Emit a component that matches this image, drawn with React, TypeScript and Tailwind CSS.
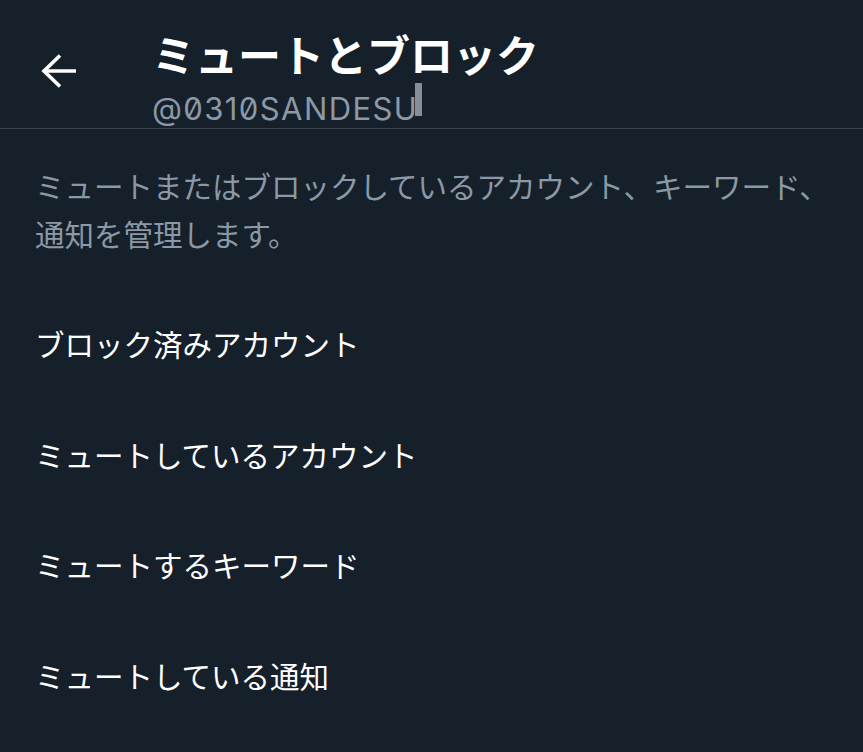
import React from "react";

const items = [
  "ブロック済みアカウント",
  "ミュートしているアカウント",
  "ミュートするキーワード",
  "ミュートしている通知",
];

export default function App() {
  return (
    <div
      className="w-[863px] h-[752px] overflow-hidden bg-[#16202b] text-white"
      style={{ fontFamily: '"Noto Sans CJK JP", "Noto Sans", sans-serif' }}
    >
      <header className="flex h-[129px] border-b border-[#38444d]">
        <div className="w-[152px] shrink-0 pl-[41px] pt-[53px]">
          <svg width="36" height="36" viewBox="0 0 36 36" fill="none" stroke="white" strokeWidth="3.6">
            <path d="M2.5 18H35" />
            <path d="M19 2.5L3 18L19 33.5" strokeLinejoin="miter" />
          </svg>
        </div>
        <div className="flex flex-col pt-[28px]">
          <h1 className="text-[43px] font-bold leading-[50px]">ミュートとブロック</h1>
          <div className="mt-[13px] leading-[36px]">
            <span
              className="relative inline-block text-[31px] tracking-[1.4px] text-[#8b98a5] slashed-zero"
              style={{ fontFamily: 'Inter, "Noto Sans", sans-serif' }}
            >
              @0310SANDESU
              <span className="absolute right-[-4px] top-[-8px] h-[33px] w-[7px] bg-[#a3abb3]/80" />
            </span>
          </div>
        </div>
      </header>
      <p className="pl-[35px] pr-[10px] pt-[32px] text-[29.5px] leading-[48px] text-[#8b98a5]">
        ミュートまたはブロックしているアカウント、キーワード、
        <br />
        通知を管理します。
      </p>
      <ul className="mt-[31px]">
        {items.map((t) => (
          <li key={t} className="flex h-[110.5px] items-center px-[35px] text-[29.5px]">
            {t}
          </li>
        ))}
      </ul>
    </div>
  );
}
